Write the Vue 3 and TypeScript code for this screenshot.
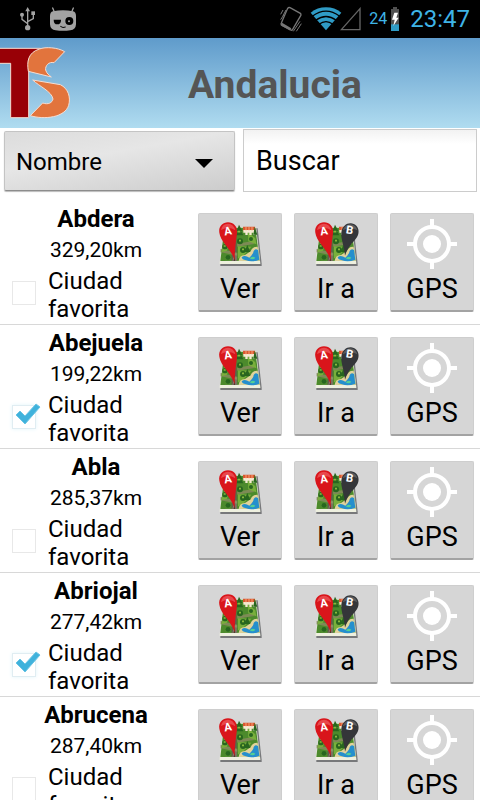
<script setup lang="ts">
import { computed, ref } from 'vue'

interface City {
  name: string
  distance: number
  favorite: boolean
}

const sortKey = ref<'name' | 'distance'>('name')
const query = ref('')

const cities = ref<City[]>([
  { name: 'Abdera', distance: 329.2, favorite: false },
  { name: 'Abejuela', distance: 199.22, favorite: true },
  { name: 'Abla', distance: 285.37, favorite: false },
  { name: 'Abriojal', distance: 277.42, favorite: true },
  { name: 'Abrucena', distance: 287.4, favorite: false },
])

const visibleCities = computed(() =>
  cities.value
    .filter((c) => c.name.toLowerCase().includes(query.value.toLowerCase()))
    .sort((a, b) =>
      sortKey.value === 'name' ? a.name.localeCompare(b.name) : a.distance - b.distance,
    ),
)

const formatDistance = (km: number): string => km.toFixed(2).replace('.', ',') + 'km'
</script>

<template>
  <div class="screen">
    <div class="status">
      <svg class="usb" width="18" height="24" viewBox="0 0 54 72" fill="#a3a3a3" stroke="#a3a3a3">
        <path d="M26 60V10M26 50L9 37V25M26 44L43 35V19" fill="none" stroke-width="4" />
        <path d="M26 0l7 13H19z" stroke="none" />
        <circle cx="26" cy="62" r="8" stroke="none" />
        <circle cx="9" cy="23" r="6" stroke="none" />
        <rect x="37" y="13" width="11" height="11" stroke="none" />
      </svg>
      <svg width="28" height="24" viewBox="0 0 84 72">
        <path d="M11 3l6 14M73 3l-6 14" stroke="#a3a3a3" stroke-width="4" stroke-linecap="round" />
        <path d="M12 13Q42 7 72 13Q81 15 81 27V52Q80 69 64 70Q42 73 20 70Q4 69 3 52V27Q3 15 12 13z" fill="#a3a3a3" />
        <path d="M14 38H36Q36 52 25 52T14 38z" />
        <circle cx="61" cy="42" r="12" />
        <circle cx="60" cy="43" r="3" fill="#a3a3a3" />
        <path d="M34 58Q42 64 50 60" fill="none" stroke="#000" stroke-width="3" />
      </svg>
      <span class="spacer"></span>
      <svg width="22" height="26" viewBox="0 0 66 78" fill="none" stroke="#777">
        <path d="M23 7Q26 3 30 5L61 22Q64 25 62 29L38 70Q36 74 32 72L6 58Q2 55 4 51z" stroke-width="4" />
        <path d="M4 54L32 70" stroke-width="8" />
        <path d="M2 25L9 12M9 29L18 12M2 41L11 27M60 46L40 76M64 53L49 76" stroke-width="3" />
      </svg>
      <svg class="wifi" width="32" height="24" viewBox="0 0 96 72">
        <path d="M48 70L2 17Q22 1 48 1T94 17z" fill="#2f9bc5" />
        <path d="M7 28Q48-3 89 28M17 40Q48 17 79 40M27 52Q48 36 69 52" fill="none" stroke="#000" stroke-width="4" />
      </svg>
      <svg class="signal" width="21" height="24" viewBox="0 0 63 72">
        <path d="M60 5V68H4z" fill="none" stroke="#666" stroke-width="4" />
      </svg>
      <span class="percent">24</span>
      <svg class="battery" width="8" height="24" viewBox="0 0 24 72">
        <path d="M6 0H18V6H24V72H0V6H6z" fill="#505050" />
        <path d="M0 52H24V72H0z" fill="#2f9bc5" />
        <path d="M10 17H21L16 32H23L7 57L11 38H3z" fill="#fff" />
      </svg>
      <time class="clock">23:47</time>
    </div>

    <header class="banner">
      <svg class="logo" width="70" height="72" viewBox="0 141 210 216" stroke="#f6dcd0" stroke-width="3">
        <path d="M-2 145H121L86 180V353H32V190H-2z" fill="#980006" />
        <path d="M118 147C137 140 173 142 194 155L162 188C146 184 135 198 137 210C140 221 147 225 154 231L85 214C80 185 84 158 118 147z" fill="#e2743d" />
        <path d="M98 240L181 254C204 265 213 291 206 316C195 352 134 360 91 347L128 309C145 315 157 308 159 297C155 274 119 260 98 240z" fill="#e2743d" />
      </svg>
      <h1>Andalucia</h1>
    </header>

    <div class="filters">
      <div class="sort">
        <select v-model="sortKey" aria-label="Ordenar por">
          <option value="name">Nombre</option>
          <option value="distance">Distancia</option>
        </select>
        <svg class="caret" width="18" height="9" viewBox="0 0 18 9"><path d="M0 0H18L9 9z" /></svg>
      </div>
      <input v-model="query" class="search" type="text" placeholder="Buscar" aria-label="Buscar" />
    </div>

    <ul class="list">
      <li v-for="city in visibleCities" :key="city.name" class="row">
        <div class="info">
          <h2>{{ city.name }}</h2>
          <p class="distance">{{ formatDistance(city.distance) }}</p>
          <label class="favorite">
            <span class="check">
              <input v-model="city.favorite" type="checkbox" />
              <svg v-if="city.favorite" class="tick" width="26" height="22" viewBox="0 0 26 22">
                <path d="M1 12L5 8L10 13L21 1L25 4L10 21z" fill="#3fb2dc" stroke="#69c4e4" stroke-linejoin="round" />
              </svg>
            </span>
            <span>Ciudad favorita</span>
          </label>
        </div>
        <button v-for="action in ['Ver', 'Ir a', 'GPS']" :key="action" class="action" type="button">
          <svg v-if="action === 'GPS'" width="50" height="50" viewBox="0 0 50 50">
            <circle cx="25" cy="25" r="17" fill="none" stroke="#fff" stroke-width="4" />
            <circle cx="25" cy="25" r="9" fill="#fff" />
            <path d="M25 0V7M25 43V50M0 25H7M43 25H50" stroke="#fff" stroke-width="4" />
          </svg>
          <svg v-else width="50" height="50" viewBox="3 8 150 150">
            <path d="M19 142L34 35L131 36L143 142V149H19z" fill="#77787a" />
            <path d="M17 138L31 32H126L139 140V143H17z" fill="#eef0df" />
            <path d="M19 134L31 34H124L137 133z" fill="#4c8a2c" />
            <path d="M52 34H66L69 134H53z" fill="#625d4e" />
            <path d="M69 82L117 74L120 83L70 91zM70 118L20 108V98L70 109z" fill="#7d8a55" />
            <path d="M34 68L48 80L38 104L22 108zM72 90L112 91L85 122L72 126zM102 48L124 66L127 84L103 75z" fill="#79af3c" />
            <path d="M74 134Q76 116 93 116L110 105Q115 90 131 91L137 133z" fill="#e1d39b" />
            <path d="M83 123Q92 115 106 124Q119 112 119 104Q124 95 132 101L136 130Q114 139 96 132Q84 130 83 123z" fill="#258fcd" />
            <path d="M107 126Q115 117 124 124Q118 132 107 126z" fill="#54d093" />
            <path d="M87 31H123L125 44H87z" fill="#d95831" />
            <path d="M88 41H124V56H118V49H113V56H106V49H101V56H94V49H88z" fill="#f5ead1" />
            <path d="M96 32V42M105 32V42M114 32V42" stroke="#f8a174" stroke-width="3" />
            <g fill="#28661f">
              <path d="M75 25L85 44H81L88 57H66L73 44H68zM122 31L130 55H118zM100 86L109 107H91z" />
              <circle cx="33" cy="91" r="8" />
              <circle cx="78" cy="75" r="9" />
              <circle cx="87" cy="101" r="9" />
              <circle cx="42" cy="123" r="7" />
              <circle cx="111" cy="68" r="6" />
            </g>
            <path d="M75 73h6M84 99h6M29 89h6M71 46h8" stroke="#8bb83d" stroke-width="5" />
            <path d="M60 105V134" stroke="#45392f" stroke-width="5" />
            <path d="M62 111L57 134M66 111V134" stroke="#aaa089" stroke-width="2" />
            <template v-if="action === 'Ir a'">
              <path d="M105 118C104 92 92 68 94 49C96 30 110 20 123 21C141 23 150 40 144 56C137 74 116 84 105 118z" fill="#343639" />
              <path d="M98 42Q105 24 123 24Q138 27 142 42Q122 30 98 42z" fill="#5a5c5f" />
              <text class="pin" x="108" y="53" transform="rotate(9 120 42)">B</text>
            </template>
            <path d="M62 132C52 97 19 76 16 49C13 32 25 18 42 18C60 18 71 32 69 50C66 77 62 96 62 132z" fill="#d9151b" />
            <path d="M21 41Q25 22 42 22Q59 22 64 42Q44 29 21 41z" fill="#e8484c" />
            <text class="pin" x="31" y="56" transform="rotate(-9 42 47)">A</text>
          </svg>
          <span>{{ action }}</span>
        </button>
      </li>
    </ul>
  </div>
</template>

<style>
body {
  margin: 0;
  background: #fff;
}
</style>

<style scoped>
.screen {
  display: flex;
  flex-direction: column;
  height: 100vh;
  overflow: hidden;
  font-family: Roboto, "Liberation Sans", sans-serif;
  font-size: 24px;
  line-height: 28px;
  color: #000;
}

.status {
  display: flex;
  flex: none;
  align-items: center;
  height: 38px;
  padding: 0 10px 0 19px;
  background: #000;
  color: #3fb4e6;
}

.usb {
  margin-right: 12px;
}

.spacer {
  flex: 1;
}

.wifi {
  margin-left: 8px;
}

.signal {
  margin-left: -2px;
}

.percent {
  margin: 0 4px 0 8px;
  font-size: 16px;
}

.battery {
  margin-right: 11px;
}

.banner {
  display: flex;
  flex: none;
  align-items: center;
  height: 90px;
  background: linear-gradient(#5f9bcb, #b0dcf0);
}

.logo {
  flex: none;
}

h1 {
  flex: 1;
  margin: 0;
  padding-top: 4px;
  text-align: center;
  font-size: 39px;
  line-height: 44px;
  font-weight: 700;
  color: #555;
}

.filters {
  display: grid;
  flex: none;
  grid-template-columns: 77fr 78fr;
  gap: 8px;
  align-items: center;
  padding: 1px 3px 9px 4px;
}

.sort {
  position: relative;
}

select {
  display: block;
  box-sizing: border-box;
  width: 100%;
  height: 60px;
  padding: 2px 48px 0 11px;
  appearance: none;
  border: 1px solid #c4c4c4;
  border-bottom-color: #8c8c8c;
  border-radius: 2px;
  background: linear-gradient(170deg, #dcdcdc, #e6e6e6 40%, #cccccc);
  box-shadow: 0 1px 1px #bbb;
  font: inherit;
  color: #000;
}

.caret {
  position: absolute;
  top: 28px;
  right: 22px;
  pointer-events: none;
}

.search {
  box-sizing: border-box;
  width: 100%;
  height: 63px;
  padding: 0 12px;
  border: 1px solid #ccc;
  background: linear-gradient(#f2f2f2, #fff 14px);
  font: inherit;
  font-size: 27px;
  color: #000;
}

.search::placeholder {
  color: #000;
  opacity: 1;
}

.list {
  flex: 1;
  min-height: 0;
  margin: 0;
  padding: 0;
  overflow: hidden;
  list-style: none;
}

.row {
  display: grid;
  grid-template-columns: 2fr 1fr 1fr 1fr;
  align-items: start;
  border-bottom: 1px solid #d8d8d8;
}

.info {
  padding: 4px 0 1px;
}

h2 {
  margin: 0;
  text-align: center;
  font-size: 24px;
  line-height: 28px;
  font-weight: 700;
}

.distance {
  margin: 0;
  text-align: center;
  font-size: 21px;
  line-height: 34px;
}

.favorite {
  display: flex;
  align-items: center;
  gap: 12px;
  padding: 0 48px 0 12px;
}

.check {
  position: relative;
  flex: none;
  width: 24px;
  height: 24px;
  margin-bottom: 4px;
}

.check input {
  display: block;
  box-sizing: border-box;
  width: 24px;
  height: 24px;
  margin: 0;
  appearance: none;
  border: 1px solid #e8e8e8;
  background: #fff;
}

.check input:checked {
  border-color: #e0edf2;
  box-shadow: 0 0 4px #e2f4fa;
}

.tick {
  position: absolute;
  top: -2px;
  left: 3px;
  pointer-events: none;
}

.action {
  display: flex;
  flex-direction: column;
  align-items: center;
  height: 99px;
  margin: 12px 6px 0;
  padding: 5px 0 0;
  border: 1px solid #cecece;
  border-bottom: 2px solid #a3a3a3;
  border-radius: 2px;
  background: #d6d6d6;
  font: inherit;
  font-size: 27px;
  line-height: 40px;
  color: #000;
}

.action svg {
  flex: none;
}

.pin {
  font-family: Roboto, sans-serif;
  font-size: 34px;
  font-weight: 700;
  fill: #fff;
}
</style>
